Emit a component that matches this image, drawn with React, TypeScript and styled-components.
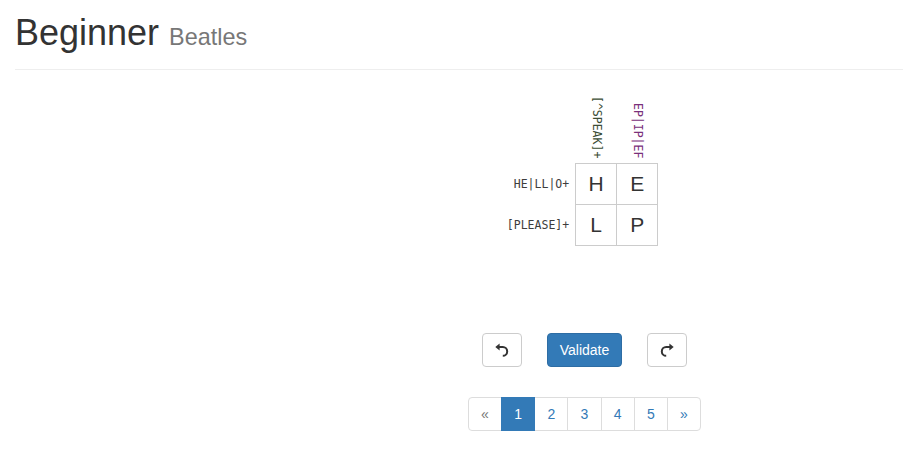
import React from "react";
import styled, { createGlobalStyle } from "styled-components";

const Global = createGlobalStyle`
  html, body { margin: 0; padding: 0; background: #fff; }
  body {
    font-family: "Liberation Sans", Arial, Helvetica, sans-serif;
    font-size: 14px;
    color: #333;
  }
  * { box-sizing: border-box; }
`;

const PageHeader = styled.div`
  margin: 13px 0 0 15px;
  padding-bottom: 16px;
  border-bottom: 1px solid #eee;
`;

const Title = styled.h1`
  margin: 0;
  font-size: 36px;
  font-weight: 400;
  line-height: 1.1;
  color: #333;
`;

const Sub = styled.small`
  font-size: 65%;
  color: #777;
  font-weight: 400;
`;

const Layout = styled.div`
  display: grid;
  grid-template-columns: 266px 1fr;
  padding: 0 15px;
`;

const Main = styled.div`
  display: flex;
  flex-direction: column;
  align-items: center;
  padding-top: 26px;
`;

const Puzzle = styled.div`
  display: grid;
  grid-template-columns: auto 83px;
  grid-template-rows: 67px 83px;
  margin-right: 4px;
`;

const Mono = styled.span<{ $color: string }>`
  font-family: "DejaVu Sans Mono", "Liberation Mono", monospace;
  font-size: 11.5px;
  color: ${(p) => p.$color};
  white-space: nowrap;
`;

const ColHeads = styled.div`
  display: grid;
  grid-template-columns: 41px 41px;
  padding-left: 1px;
`;

const ColHead = styled.div`
  display: flex;
  justify-content: center;
  align-items: flex-end;
  padding-bottom: 5px;
  ${Mono} {
    writing-mode: vertical-rl;
    line-height: 14px;
  }
`;

const RowHeads = styled.div`
  display: grid;
  grid-template-rows: 41px 41px;
  padding-top: 1px;
  padding-right: 6px;
`;

const RowHead = styled.div`
  display: flex;
  align-items: center;
  justify-content: flex-end;
`;

const Cells = styled.div`
  display: grid;
  grid-template-columns: 41px 41px;
  grid-template-rows: 41px 41px;
  border-left: 1px solid #ccc;
  border-top: 1px solid #ccc;
`;

const Cell = styled.div`
  border-right: 1px solid #ccc;
  border-bottom: 1px solid #ccc;
  display: flex;
  align-items: center;
  justify-content: center;
  font-size: 21px;
  color: #333;
`;

const Controls = styled.div`
  display: flex;
  gap: 25px;
  margin-top: 87px;
`;

const Btn = styled.button<{ $primary?: boolean }>`
  height: 34px;
  padding: 6px 12px;
  font-family: "Liberation Sans", Arial, sans-serif;
  font-size: 14px;
  line-height: 20px;
  border-radius: 4px;
  border: 1px solid ${(p) => (p.$primary ? "#2e6da4" : "#ccc")};
  background: ${(p) => (p.$primary ? "#337ab7" : "#fff")};
  color: ${(p) => (p.$primary ? "#fff" : "#333")};
  display: flex;
  align-items: center;
  justify-content: center;
  cursor: pointer;
`;

const Pager = styled.ul`
  display: flex;
  list-style: none;
  margin: 30px 0 0;
  padding: 0;
`;

const PageItem = styled.li<{ $active?: boolean; $disabled?: boolean; $first?: boolean; $last?: boolean }>`
  padding: 6px 12.2px;
  line-height: 20px;
  font-size: 14px;
  margin-left: ${(p) => (p.$first ? "0" : "-1px")};
  border: 1px solid ${(p) => (p.$active ? "#337ab7" : "#ddd")};
  background: ${(p) => (p.$active ? "#337ab7" : "#fff")};
  color: ${(p) => (p.$active ? "#fff" : p.$disabled ? "#777" : "#337ab7")};
  border-radius: ${(p) => (p.$first ? "4px 0 0 4px" : p.$last ? "0 4px 4px 0" : "0")};
  position: ${(p) => (p.$active ? "relative" : "static")};
  z-index: ${(p) => (p.$active ? 2 : "auto")};
`;

const UndoIcon = ({ flip }: { flip?: boolean }) => (
  <svg width="14" height="14" viewBox="0 0 14 14" style={flip ? { transform: "scaleX(-1)" } : undefined}>
    <path d="M3.5 4 H7.8 A4.4 4.4 0 0 1 7.8 12.8" fill="none" stroke="#333" strokeWidth="2" />
    <path d="M0.3 4 L4.6 0.4 V7.6 Z" fill="#333" />
  </svg>
);

const colHeads = [
  { text: "[^SPEAK]+", color: "#3b4d35" },
  { text: "EP|IP|EF", color: "#7a2f7a" },
];
const rowHeads = ["HE|LL|O+", "[PLEASE]+"];
const letters = ["H", "E", "L", "P"];

export default function App() {
  return (
    <>
      <Global />
      <PageHeader>
        <Title>
          Beginner <Sub>Beatles</Sub>
        </Title>
      </PageHeader>
      <Layout>
        <div />
        <Main>
          <Puzzle>
            <div />
            <ColHeads>
              {colHeads.map((c) => (
                <ColHead key={c.text}>
                  <Mono $color={c.color}>{c.text}</Mono>
                </ColHead>
              ))}
            </ColHeads>
            <RowHeads>
              {rowHeads.map((r) => (
                <RowHead key={r}>
                  <Mono $color="#3d3d3d">{r}</Mono>
                </RowHead>
              ))}
            </RowHeads>
            <Cells>
              {letters.map((l) => (
                <Cell key={l}>{l}</Cell>
              ))}
            </Cells>
          </Puzzle>
          <Controls>
            <Btn aria-label="Undo">
              <UndoIcon />
            </Btn>
            <Btn $primary>Validate</Btn>
            <Btn aria-label="Redo">
              <UndoIcon flip />
            </Btn>
          </Controls>
          <Pager>
            <PageItem $first $disabled>«</PageItem>
            <PageItem $active>1</PageItem>
            <PageItem>2</PageItem>
            <PageItem>3</PageItem>
            <PageItem>4</PageItem>
            <PageItem>5</PageItem>
            <PageItem $last>»</PageItem>
          </Pager>
        </Main>
      </Layout>
    </>
  );
}
